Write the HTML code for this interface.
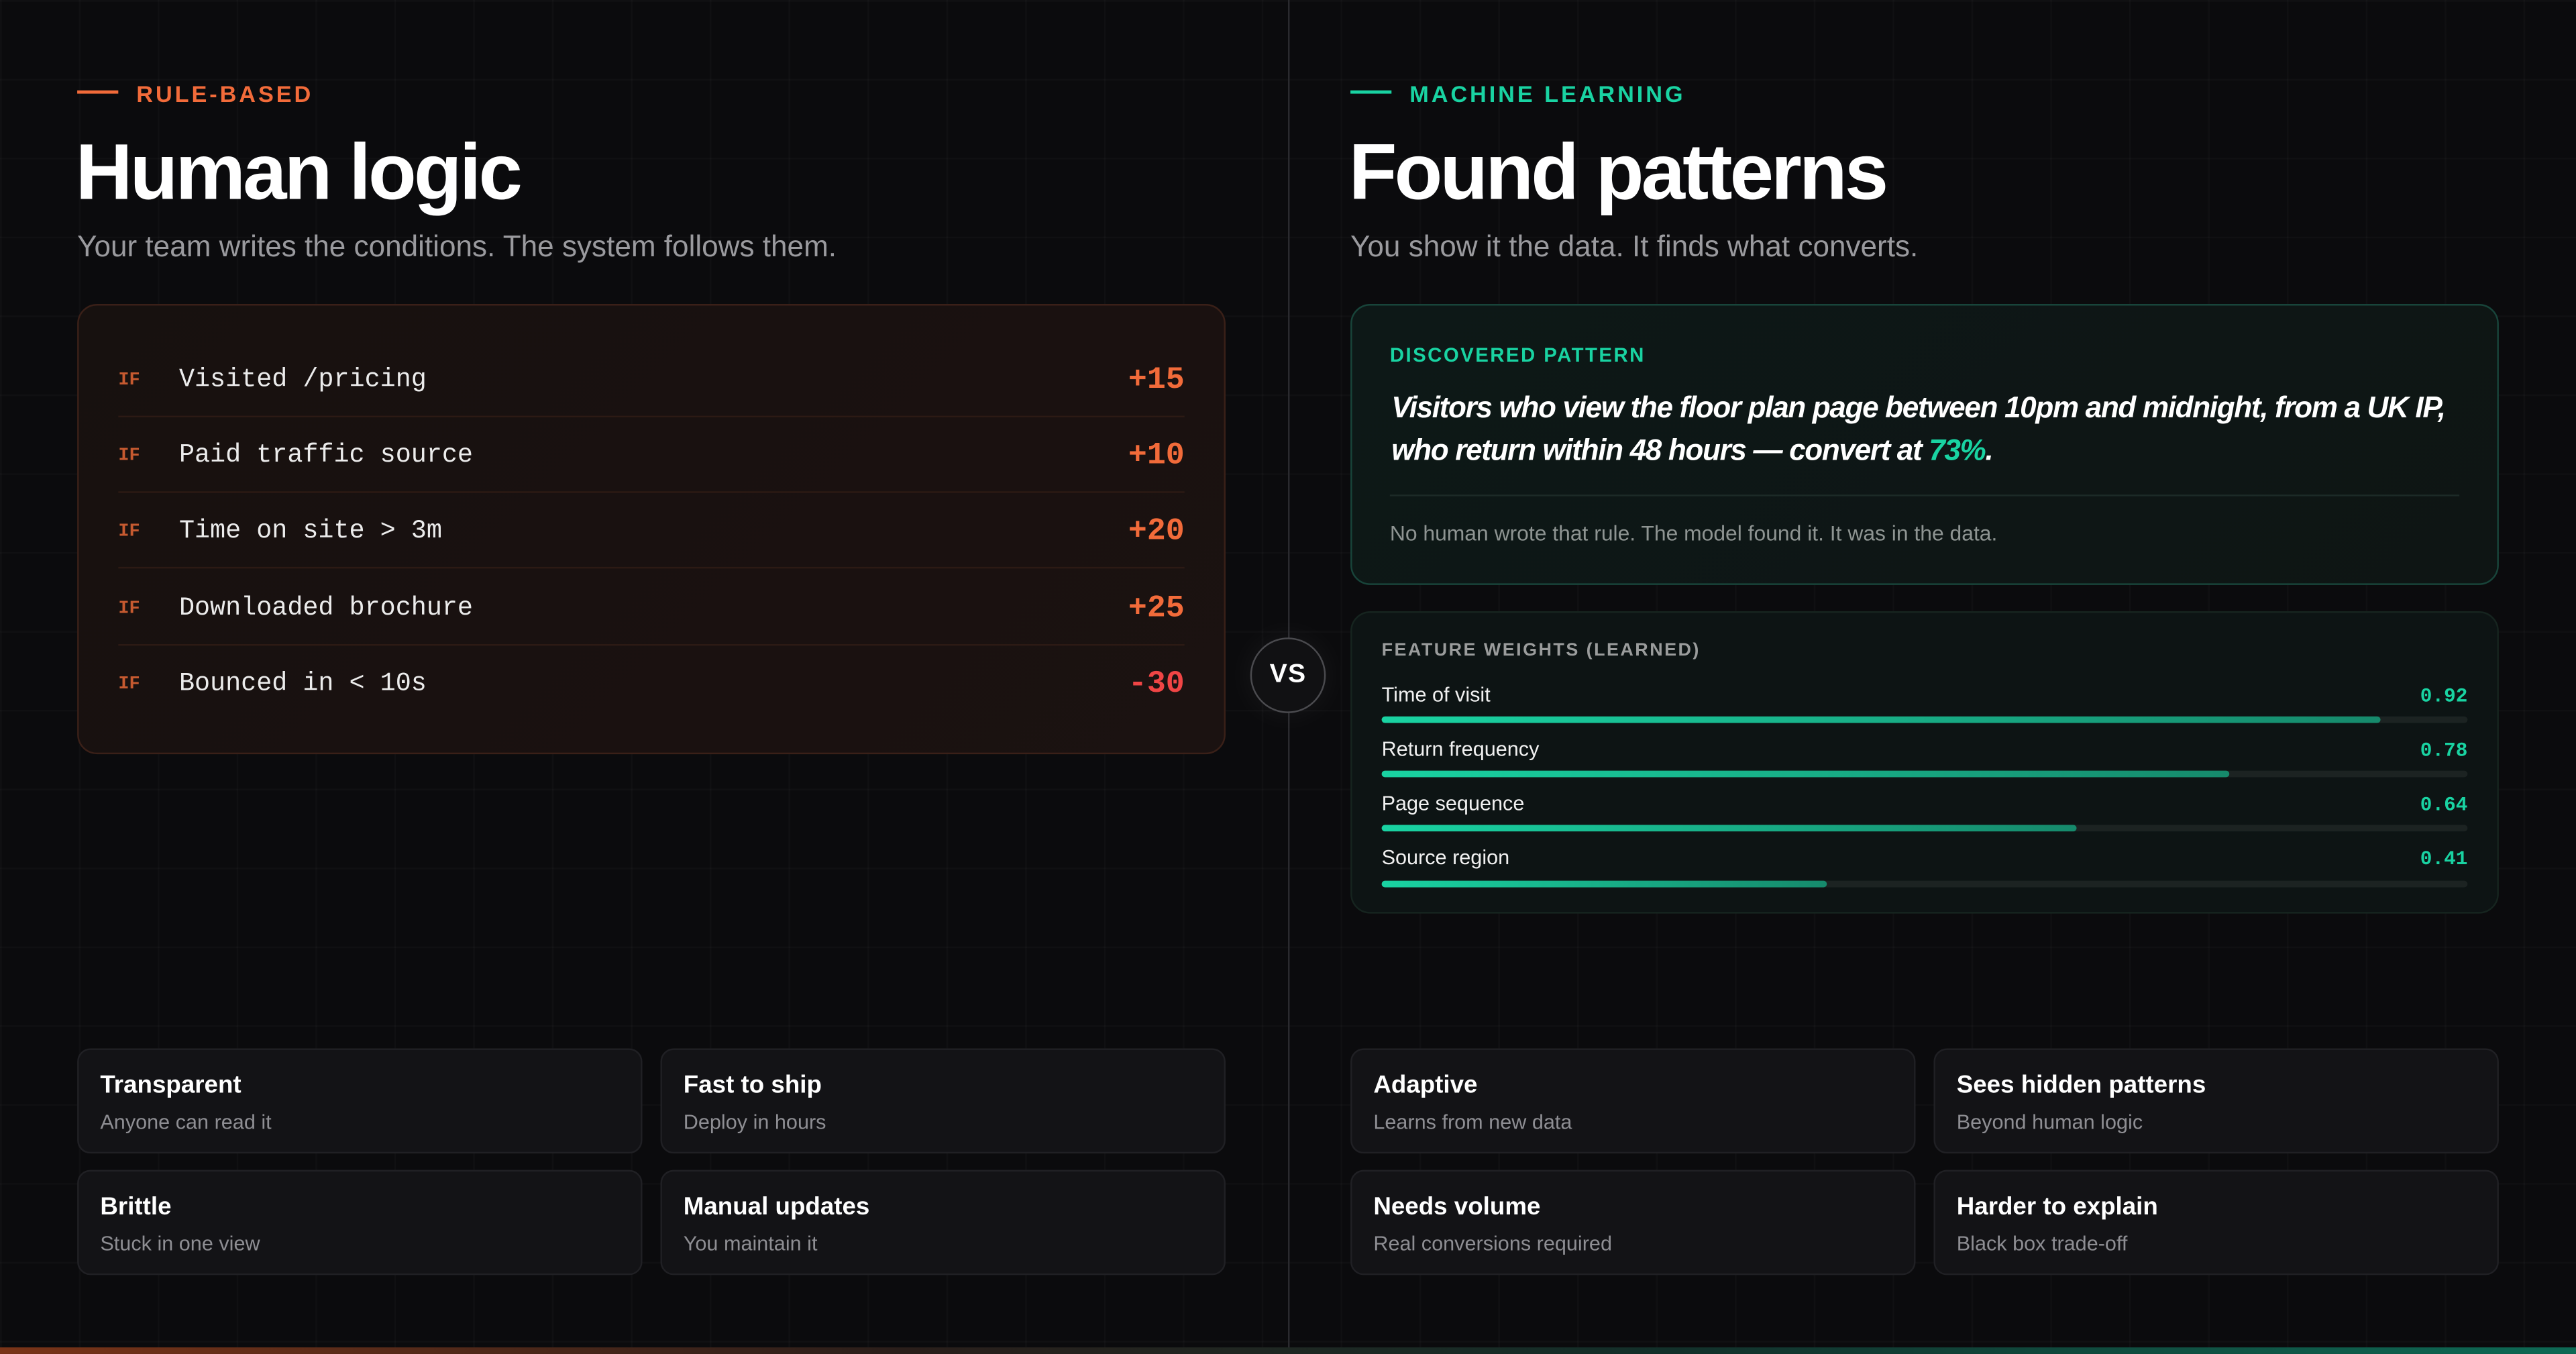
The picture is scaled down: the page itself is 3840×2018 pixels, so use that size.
<!DOCTYPE html>
<html><head><meta charset="utf-8"><style>
html,body{margin:0;padding:0;background:#0b0b0d;width:3840px;height:2016px;overflow:hidden}
#s{position:absolute;left:0;top:0;width:1568px;height:824px;transform:scale(2.44898);transform-origin:0 0;font-family:"Liberation Sans",sans-serif;color:#fff;
background-color:#0b0b0d;background-image:linear-gradient(rgba(255,255,255,0.018) 1px,transparent 1px),linear-gradient(90deg,rgba(255,255,255,0.018) 1px,transparent 1px);background-size:48px 48px}
.a{position:absolute}
.eb{font-size:14px;font-weight:700;letter-spacing:1.6px}
.eb i{display:inline-block;width:25px;height:2px;vertical-align:middle;margin-right:11px;position:relative;top:-2px}
h1{margin:0;font-size:48px;font-weight:700;letter-spacing:-1.6px;line-height:1}
.sub{font-size:18px;color:#9a9a9e}
.rc{left:47px;top:185px;width:697px;height:272px;border:1px solid #3a2018;border-radius:12px;background:linear-gradient(135deg,#17110f,#1a1110 70%,#1b1211)}
.row{position:absolute;left:24px;right:24px;height:46px;border-bottom:1px solid #2c1a14;font-family:"Liberation Mono",monospace}
.row .if{position:absolute;left:0;top:19px;font-size:11px;font-weight:700;color:#c65a30}
.row .t{position:absolute;left:37px;top:15px;font-size:15.7px;color:#ececec}
.row .v{position:absolute;right:0;top:13px;font-size:19px;font-weight:700;color:#f26b3a}
.tile{position:absolute;width:342px;height:62px;background:#131316;border:1px solid #202024;border-radius:8px}
.tile b{position:absolute;left:13px;top:13px;font-size:15px}
.tile span{position:absolute;left:13px;top:37px;font-size:12.5px;color:#8e8e93}
.wl{position:absolute;left:18px;font-size:12.5px;color:#f0f0f0}
.wv{position:absolute;right:18px;font-size:12px;font-weight:700;color:#19d3a2;font-family:"Liberation Mono",monospace}
.bar{position:absolute;left:18px;right:18px;height:4px;border-radius:2px;background:#1c2322}
.bar i{display:block;height:100%;border-radius:2px;background:linear-gradient(90deg,#19d3a2,#168a6c)}
</style></head><body><div id="s">
<div class="a" style="left:784px;top:0;width:1px;height:824px;background:#2a2a2e"></div>

<div class="a eb" style="left:47px;top:49px;color:#f26b3a"><i style="background:#f26b3a"></i>RULE-BASED</div>
<h1 class="a" style="left:46px;top:82px">Human logic</h1>
<div class="a sub" style="left:47px;top:140px">Your team writes the conditions. The system follows them.</div>
<div class="a rc">
<div class="row" style="top:21px"><span class="if">IF</span><span class="t">Visited /pricing</span><span class="v">+15</span></div>
<div class="row" style="top:67px"><span class="if">IF</span><span class="t">Paid traffic source</span><span class="v">+10</span></div>
<div class="row" style="top:113px"><span class="if">IF</span><span class="t">Time on site &gt; 3m</span><span class="v">+20</span></div>
<div class="row" style="top:160px"><span class="if">IF</span><span class="t">Downloaded brochure</span><span class="v">+25</span></div>
<div class="row" style="top:206px;border:none"><span class="if">IF</span><span class="t">Bounced in &lt; 10s</span><span class="v" style="color:#f04545">-30</span></div>
</div>

<div class="a" style="left:761px;top:388px;width:44px;height:44px;border-radius:50%;background:#111113;border:1.5px solid #4a4a4e;box-shadow:0 0 20px rgba(255,255,255,0.06);text-align:center;line-height:44px;font-weight:700;font-size:16px;letter-spacing:0.5px">VS</div>

<div class="a eb" style="left:822px;top:49px;color:#19d3a2"><i style="background:#19d3a2"></i>MACHINE LEARNING</div>
<h1 class="a" style="left:821px;top:82px">Found patterns</h1>
<div class="a sub" style="left:822px;top:140px">You show it the data. It finds what converts.</div>

<div class="a" style="left:822px;top:185px;width:697px;height:169px;border:1px solid #18443a;border-radius:12px;background:linear-gradient(135deg,#0d1817,#0e1514)">
<div class="a" style="left:23px;top:23px;font-size:12px;font-weight:700;letter-spacing:1px;color:#19d3a2">DISCOVERED PATTERN</div>
<div class="a" style="left:24px;top:49px;width:672px;font-size:18px;font-style:italic;font-weight:700;line-height:26px;letter-spacing:-0.55px">Visitors who view the floor plan page between 10pm and midnight, from a UK IP, who return within 48 hours — convert at <span style="color:#19d3a2">73%</span>.</div>
<div class="a" style="left:23px;right:23px;top:115px;height:1px;background:#1c2a27"></div>
<div class="a" style="left:23px;top:131px;font-size:13px;color:#8e9492">No human wrote that rule. The model found it. It was in the data.</div>
</div>

<div class="a" style="left:822px;top:372px;width:697px;height:182px;border:1px solid #16241f;border-radius:12px;background:#0d1414">
<div class="a" style="left:18px;top:17px;font-size:11px;font-weight:700;letter-spacing:1px;color:#9a9c9c">FEATURE WEIGHTS (LEARNED)</div>
<div class="wl" style="top:43px">Time of visit</div><div class="wv" style="top:44px">0.92</div><div class="bar" style="top:63px"><i style="width:92%"></i></div>
<div class="wl" style="top:76px">Return frequency</div><div class="wv" style="top:77px">0.78</div><div class="bar" style="top:96px"><i style="width:78%"></i></div>
<div class="wl" style="top:109px">Page sequence</div><div class="wv" style="top:110px">0.64</div><div class="bar" style="top:129px"><i style="width:64%"></i></div>
<div class="wl" style="top:142px">Source region</div><div class="wv" style="top:143px">0.41</div><div class="bar" style="top:163px"><i style="width:41%"></i></div>
</div>

<div class="tile" style="left:47px;top:638px"><b>Transparent</b><span>Anyone can read it</span></div>
<div class="tile" style="left:402px;top:638px"><b>Fast to ship</b><span>Deploy in hours</span></div>
<div class="tile" style="left:47px;top:712px"><b>Brittle</b><span>Stuck in one view</span></div>
<div class="tile" style="left:402px;top:712px"><b>Manual updates</b><span>You maintain it</span></div>
<div class="tile" style="left:822px;top:638px"><b>Adaptive</b><span>Learns from new data</span></div>
<div class="tile" style="left:1177px;top:638px"><b>Sees hidden patterns</b><span>Beyond human logic</span></div>
<div class="tile" style="left:822px;top:712px"><b>Needs volume</b><span>Real conversions required</span></div>
<div class="tile" style="left:1177px;top:712px"><b>Harder to explain</b><span>Black box trade-off</span></div>

<div class="a" style="left:0;top:820px;width:1568px;height:4px;background:linear-gradient(90deg,#7a3418,#2a1e1a 35%,#12302a 65%,#0e6a55)"></div>
</div></body></html>
